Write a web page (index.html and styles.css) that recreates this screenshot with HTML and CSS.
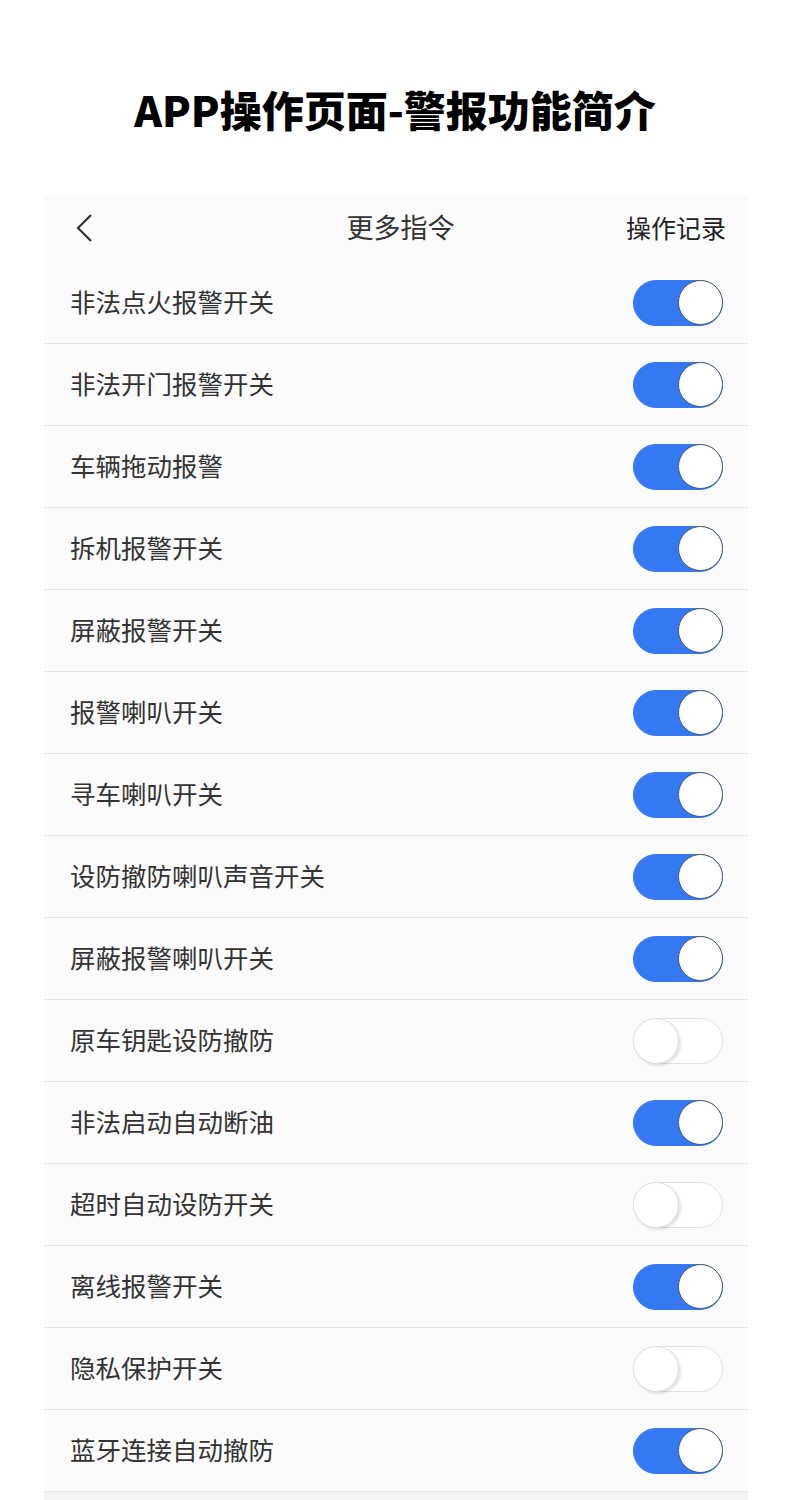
FILE: index.html
```html
<!DOCTYPE html>
<html lang="zh-CN">

<head>
    <meta charset="UTF-8">
    <meta name="viewport" content="width=device-width, initial-scale=1.0">
    <title>APP操作页面-警报功能简介</title>
    <link rel="stylesheet" href="styles.css">
</head>

<body>
    <h1 class="title">APP操作页面-警报功能简介</h1>
    <div class="card">
        <div class="nav">
            <svg class="back" width="18" height="30" viewBox="0 0 18 30">
                <path d="M16 2 L3 15 L16 28" fill="none" stroke="#333" stroke-width="2.2" />
            </svg>
            <div class="nav-title">更多指令</div>
            <div class="nav-right">操作记录</div>
        </div>
        <ul class="list">
            <li><span>非法点火报警开关</span><i class="switch on"></i></li>
            <li><span>非法开门报警开关</span><i class="switch on"></i></li>
            <li><span>车辆拖动报警</span><i class="switch on"></i></li>
            <li><span>拆机报警开关</span><i class="switch on"></i></li>
            <li><span>屏蔽报警开关</span><i class="switch on"></i></li>
            <li><span>报警喇叭开关</span><i class="switch on"></i></li>
            <li><span>寻车喇叭开关</span><i class="switch on"></i></li>
            <li><span>设防撤防喇叭声音开关</span><i class="switch on"></i></li>
            <li><span>屏蔽报警喇叭开关</span><i class="switch on"></i></li>
            <li><span>原车钥匙设防撤防</span><i class="switch"></i></li>
            <li><span>非法启动自动断油</span><i class="switch on"></i></li>
            <li><span>超时自动设防开关</span><i class="switch"></i></li>
            <li><span>离线报警开关</span><i class="switch on"></i></li>
            <li><span>隐私保护开关</span><i class="switch"></i></li>
            <li><span>蓝牙连接自动撤防</span><i class="switch on"></i></li>
        </ul>
        <div class="foot"></div>
    </div>
</body>

</html>
```

FILE: styles.css
```css
* {
    padding: 0;
    margin: 0;
}

body {
    background: #fff;
    font-family: "Noto Sans CJK SC", "Noto Sans", sans-serif;
    color: #333;
}

.title {
    padding-top: 81px;
    height: 114px;
    text-align: center;
    font-size: 42px;
    font-weight: 900;
    line-height: 56px;
    color: #000;
}

.card {
    margin: 0 42px 0 44px;
    background: #fbfbfb;
}

.nav {
    height: 67px;
    display: grid;
    grid-template-columns: 1fr auto 1fr;
    align-items: center;
    padding: 0 22px 4px 31px;
    box-sizing: border-box;
}

.back {
    display: block;
    margin-top: 2px;
}

.nav-title {
    text-align: center;
    font-size: 27px;
    color: #333;
}

.nav-right {
    text-align: right;
    font-size: 25px;
    color: #222;
}

.list li {
    list-style: none;
    height: 81px;
    border-bottom: 1px solid #e8e8e8;
    display: flex;
    align-items: center;
    justify-content: space-between;
    padding: 0 25px 0 26px;
    font-size: 25.5px;
    color: #333;
}

.list li span {
    margin-top: -4px;
}

.switch {
    width: 88px;
    height: 44px;
    border-radius: 23px;
    border: 1px solid #e2e2e2;
    background: #fff;
    position: relative;
    display: block;
}

.switch::after {
    content: "";
    position: absolute;
    top: -1px;
    left: -1px;
    width: 44px;
    height: 44px;
    border-radius: 50%;
    background: #fff;
    border: 1px solid #e0e0e0;
    box-shadow: 2px 2px 3px rgba(0, 0, 0, 0.12);
}

.switch.on {
    background: #3479f3;
    border-color: #3479f3;
}

.switch.on::after {
    left: auto;
    right: -1px;
    border: 1.5px solid #4b5b6c;
    width: 43px;
    height: 43px;
    box-shadow: none;
}

.foot {
    height: 10px;
    background: #f3f3f5;
}
```
